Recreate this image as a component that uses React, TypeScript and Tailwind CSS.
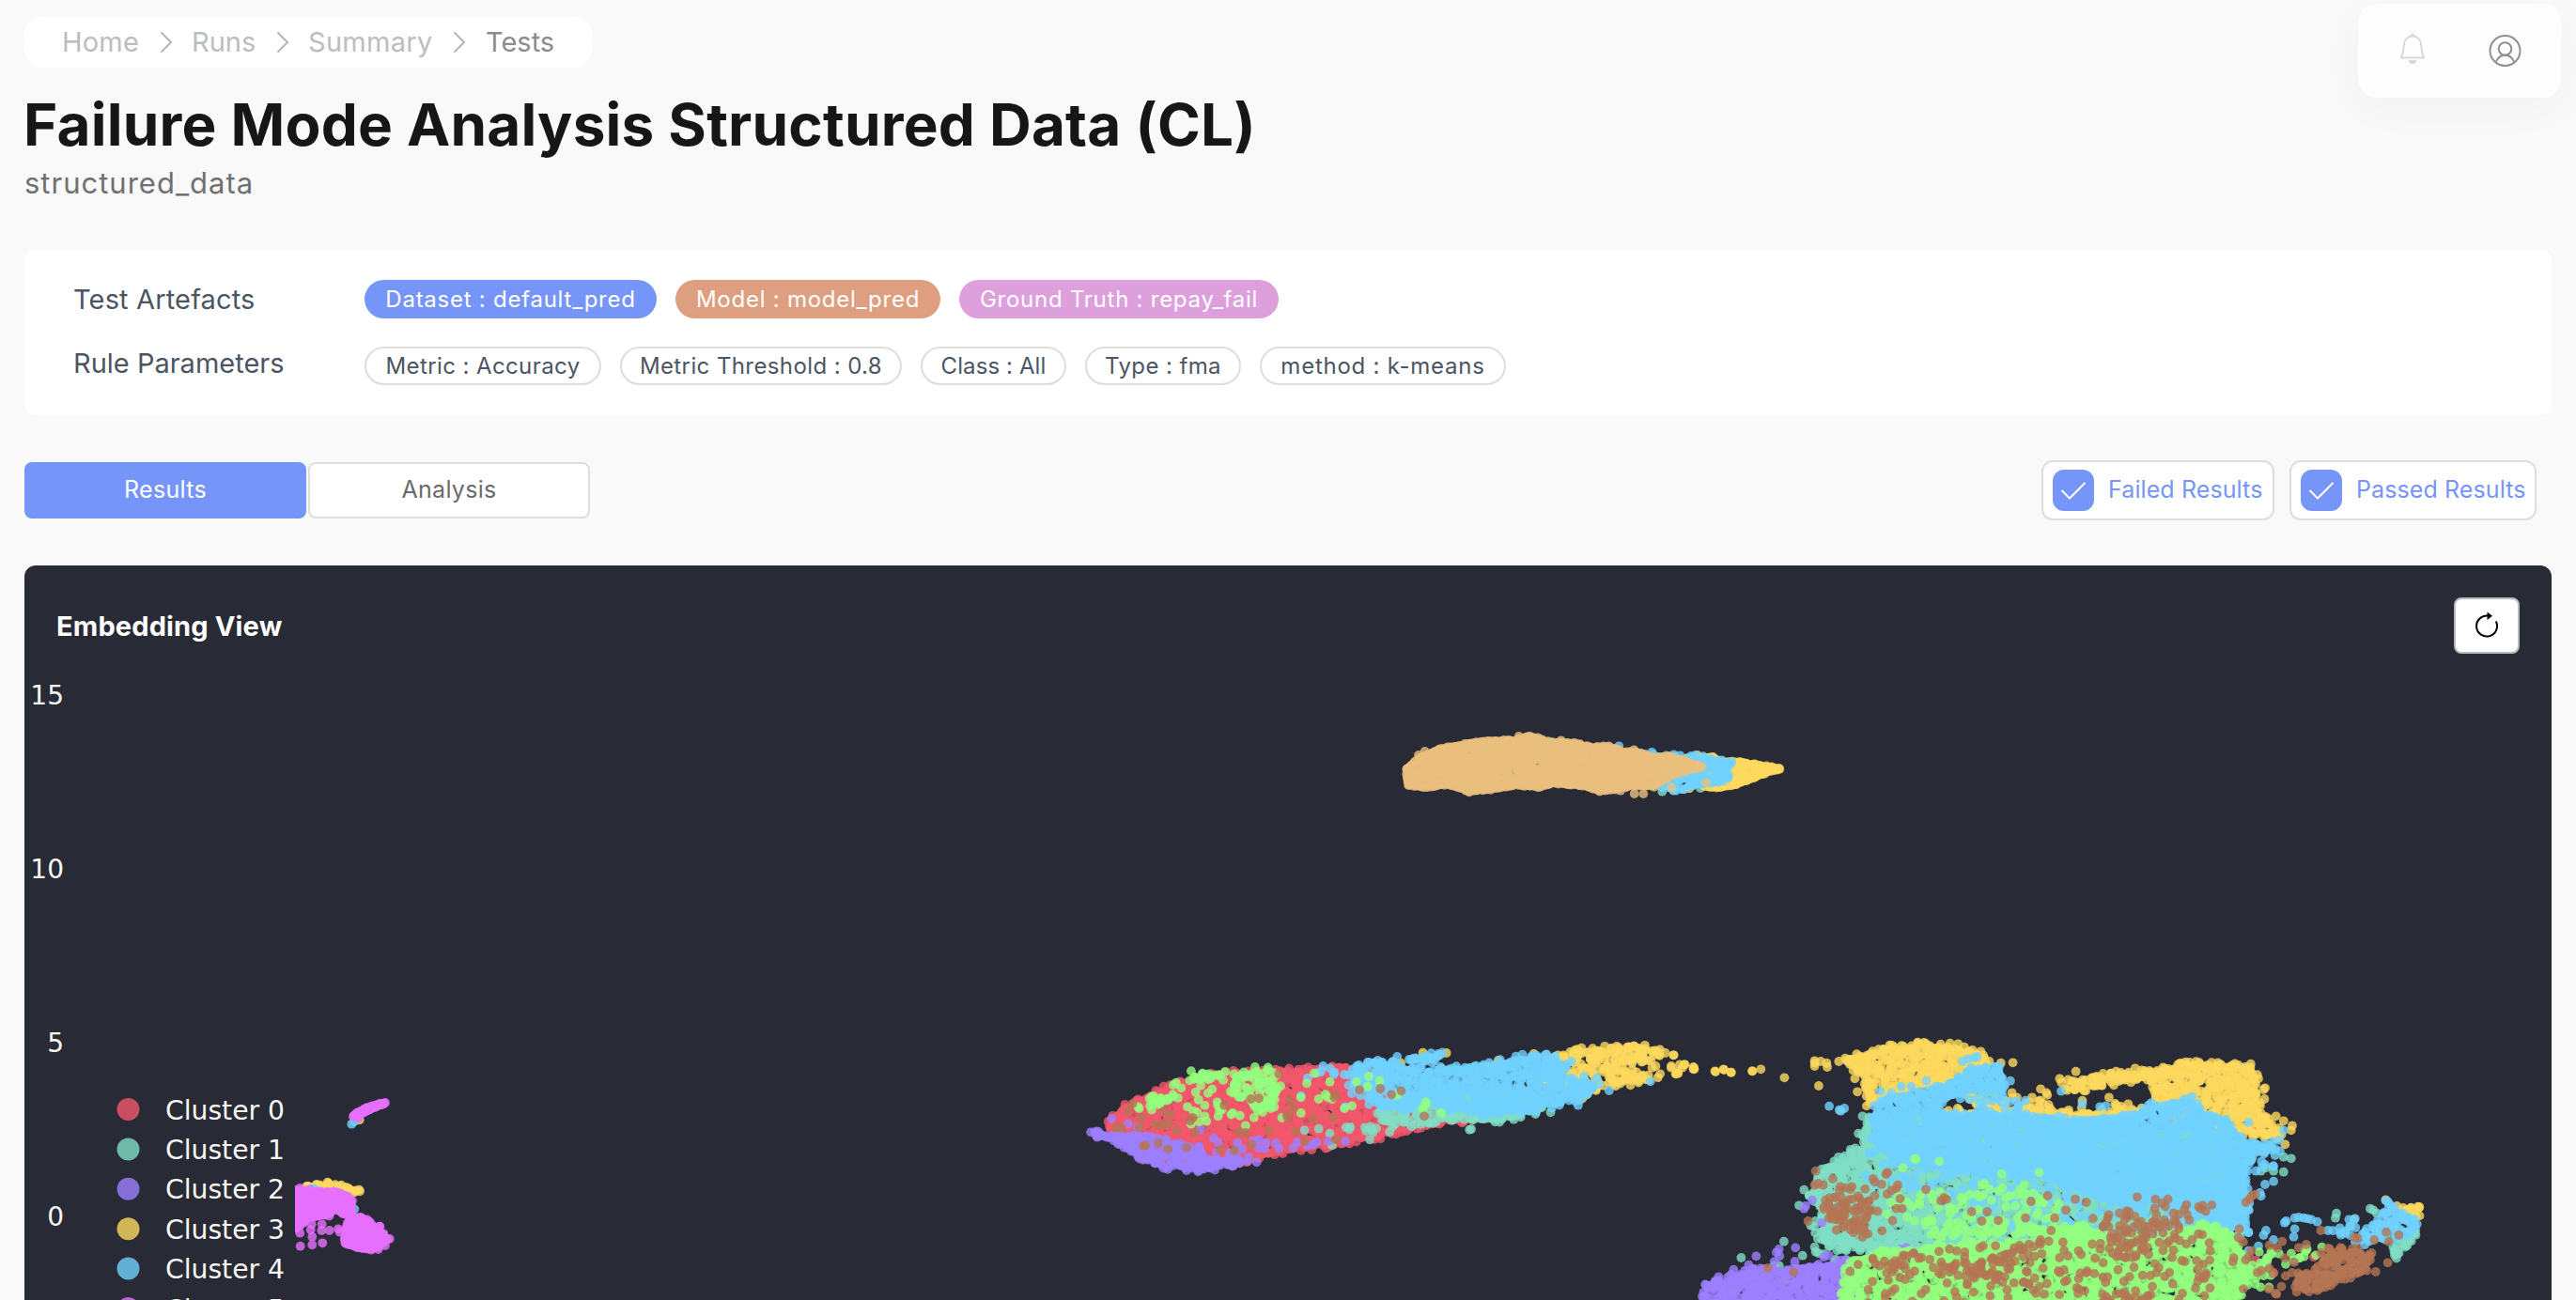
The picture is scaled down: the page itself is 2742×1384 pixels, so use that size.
import type { ReactNode } from "react";
import clsx from "clsx";

const COLORS = {
  red: "#f2576c",
  teal: "#80dfc4",
  purple: "#9c7fff",
  yellow: "#fdd95e",
  cyan: "#71d2ff",
  magenta: "#e670fd",
  orange: "#eabf7e",
  green: "#93ff7e",
  brown: "#b47554",
};

type Color = keyof typeof COLORS;

interface Group {
  color: Color;
  // outline that gets filled with points
  area?: string;
  // average distance between two points
  step?: number;
  // single points
  dots?: string;
}

interface Island {
  x: number;
  y: number;
  sx: number;
  sy: number;
  groups: Group[];
}

const islands: Island[] = [
  {
    x: 1460,
    y: 750,
    sx: 3,
    sy: 3,
    groups: [
      { color: "teal", dots: "928,278 965,275 998,270 1050,267 575,120" },
      { color: "yellow", step: 3.5, area: "1000,172 1090,170 1110,182 1180,186 1300,205 1270,213 1210,238 1170,252 1110,266 1060,260 1000,200" },
      { color: "yellow", dots: "1040,162 1090,168 1152,182 1176,184 1303,206 1015,268 1198,240 1165,255" },
      { color: "cyan", step: 4, area: "900,170 950,170 1050,172 1145,190 1100,215 1138,228 1110,243 1080,250 970,268 920,260" },
      { color: "cyan", dots: "895,153 965,160 985,163 1020,165 1150,185 1135,230 790,133 860,155 900,160" },
      { color: "orange", step: 3.5, area: "112,206 150,174 220,142 320,124 400,116 460,115 500,101 530,108 570,122 650,124 700,138 760,134 800,152 850,154 900,170 950,166 1055,200 1000,208 940,235 900,262 840,258 780,270 730,276 680,260 580,250 530,263 460,256 370,272 310,276 240,255 170,264 117,256" },
      { color: "orange", dots: "839,285 868,285 150,162 838,145 958,265 1068,250 1000,215 605,115 170,150 470,102 312,280 795,275 112,206 118,258" },
    ],
  },
  {
    x: 1130,
    y: 1080,
    sx: 2.119,
    sy: 3,
    groups: [
      { color: "red", step: 4.5, area: "102,345 150,295 220,245 300,205 400,186 540,180 640,172 720,200 760,300 920,335 830,345 720,388 620,412 500,435 400,470 330,478 260,470 180,450 120,375" },
      { color: "teal", step: 5, area: "720,310 780,275 830,240 950,240 1100,260 1080,305 990,335 870,335 790,350 720,345" },
      { color: "teal", step: 8, area: "630,355 720,315 720,375 690,390 640,375" },
      { color: "teal", dots: "548,370 580,365 920,368 924,366 610,418 740,375 1103,313 605,380 695,400 1020,335 830,345" },
      { color: "purple", step: 4.5, area: "70,380 110,388 150,392 240,405 310,430 320,465 400,468 385,485 300,493 230,483 190,463 140,418" },
      { color: "purple", step: 9, area: "330,410 460,400 520,400 640,400 600,412 480,440 400,470 350,450" },
      { color: "purple", dots: "113,333 150,350 313,368 66,376 418,468 440,472 445,400 640,405 575,408 307,497 172,360 343,395 80,392" },
      { color: "yellow", step: 5, area: "1110,132 1170,118 1280,103 1330,110 1355,130 1310,145 1250,155 1250,175 1330,200 1300,212 1220,222 1180,255 1080,210" },
      { color: "yellow", dots: "1380,130 1405,160 1427,175 1425,168 1375,170 1385,190 1332,170 1340,165 1475,183 1493,175 1510,185 1558,181 1065,126 868,123 815,122 985,147 765,155 1175,268 1375,165 1390,182 1400,170 1345,202 1350,190" },
      { color: "cyan", step: 4.5, area: "655,178 700,153 755,160 790,180 900,174 960,162 1060,134 1110,138 1140,165 1100,190 1180,215 1205,228 1190,248 1160,268 1060,305 960,312 880,300 820,270 780,300 700,280 690,210" },
      { color: "cyan", step: 8, area: "550,205 590,165 660,180 690,210 700,280 655,260 640,205" },
      { color: "cyan", step: 5, area: "790,135 860,128 830,150 795,148" },
      { color: "cyan", dots: "540,260 1235,243 1165,290 1328,214 1150,150 1178,198 1207,202 757,135 748,150 640,295 950,325 555,203 590,165 605,172" },
      { color: "green", step: 6, area: "300,193 360,186 358,200 300,208" },
      { color: "green", step: 6, area: "390,205 410,184 470,178 488,240 468,312 440,298 432,262 388,253" },
      { color: "green", step: 6, area: "195,267 252,264 240,278 202,292" },
      { color: "green", step: 12, area: "250,215 360,200 500,185 500,310 380,350 290,350 260,320" },
      { color: "green", dots: "258,218 270,235 172,295 175,300 570,188 553,220 605,215 693,198 717,212 690,230 665,215 655,292 638,300 600,265 610,270 595,255 540,265 540,315 580,270 822,280 815,300 820,290 857,315 757,258 497,330 415,355 292,350 323,325 386,315 353,325" },
      { color: "brown", step: 7, area: "200,352 240,347 370,375 360,388 260,382 215,370" },
      { color: "brown", step: 9, area: "545,340 570,325 640,328 600,350" },
      { color: "brown", dots: "490,190 427,270 445,268 367,290 160,285 150,310 180,330 123,362 135,362 175,360 185,420 189,418 218,410 240,430 282,425 358,432 390,435 428,415 468,370 415,378 400,375 548,405 618,400 528,373 618,255 615,265 672,241 719,237 744,256 766,244 818,325 523,300 510,330 515,275 296,330 230,310 245,320 290,340 508,320" },
    ],
  },
  {
    x: 300,
    y: 1150,
    sx: 3,
    sy: 3,
    groups: [
      { color: "yellow", step: 4, area: "70,345 120,338 150,333 180,340 240,355 200,360 110,350" },
      { color: "yellow", dots: "150,333 190,335 228,353 249,355 175,388 190,392 248,127" },
      { color: "cyan", dots: "105,347 98,346 232,412 185,392 223,140 232,132" },
      { color: "magenta", step: 3.5, area: "30,352 60,352 90,357 180,357 215,374 222,395 222,435 195,425 180,412 160,415 150,432 120,430 80,442 50,470 30,475" },
      { color: "magenta", step: 3.5, area: "218,440 250,438 278,450 298,472 318,490 336,507 308,532 285,538 240,535 200,518 205,470" },
      { color: "magenta", step: 1.8, area: "230,113 242,104 265,93 290,83 325,73 328,74 290,88 265,100 250,109 238,117" },
      { color: "magenta", dots: "58,345 90,348 58,488 59,530 97,526 130,520 97,500 92,478 127,480 152,480 180,475 185,485 128,460 312,467 95,460 70,455 344,507 330,72 313,467 325,490 330,528 308,540 285,542 225,385 228,116 245,120 200,380 190,395" },
    ],
  },
  {
    x: 1780,
    y: 1080,
    sx: 1.867,
    sy: 3,
    groups: [
      { color: "red", dots: "1160,785 1275,775 1195,825" },
      { color: "teal", step: 4.5, area: "395,325 380,380 385,420 345,450 295,510 275,580 300,620 300,720 420,755 760,760 1130,700 1130,500 1100,390 700,345" },
      { color: "teal", step: 8, area: "300,700 420,740 400,800 290,790 270,740" },
      { color: "teal", step: 7, area: "252,685 275,650 300,670 310,735" },
      { color: "teal", step: 6, area: "590,245 640,240 655,275 600,280" },
      { color: "teal", step: 12, area: "80,850 200,800 330,790 350,912 80,912" },
      { color: "teal", dots: "137,777 222,725 283,743 259,770 1215,455 1230,460 1195,500 1215,503 1170,500 1180,490 355,440 370,380 378,325 252,610 262,560 280,570 1320,635 1393,625 1355,655 1387,620 1400,635 1318,650" },
      { color: "teal", step: 5, area: "1435,740 1470,690 1480,700 1460,745 1435,770 1430,765" },
      { color: "purple", step: 4.5, area: "68,872 90,853 160,818 250,818 300,804 345,788 362,850 365,930 62,930" },
      { color: "purple", step: 10, area: "205,745 230,770 380,760 380,800 200,790" },
      { color: "purple", dots: "262,620 265,612 278,593 167,772 245,745 212,750 207,760 297,665 465,745 453,750 68,865 92,838 152,800 122,815" },
      { color: "yellow", step: 4.5, area: "345,147 425,108 490,97 565,106 608,127 628,160 600,200 500,225 430,250 392,283 380,200" },
      { color: "yellow", dots: "283,155 307,155 295,150 308,168 283,148 283,165 331,150 291,228 223,202 176,175 159,181 117,185 103,177 85,181 42,175 43,170 25,160 15,160 12,188 8,190 3,130 677,154 653,155 363,205 368,247 675,250 552,92 568,94 488,92 432,98 613,118 685,265" },
      { color: "yellow", step: 4.5, area: "945,188 1030,158 1090,160 1145,166 1158,195 1158,240 1166,320 1200,370 1208,390 1180,388 1120,370 1050,350 960,300 957,230" },
      { color: "yellow", step: 5, area: "780,218 860,196 945,184 945,205 880,212 840,232 785,238" },
      { color: "yellow", step: 7, area: "700,275 750,243 775,250 760,275 730,312 705,305" },
      { color: "yellow", step: 10, area: "840,240 930,235 900,262 850,255" },
      { color: "yellow", step: 9, area: "800,300 950,280 950,320 800,320" },
      { color: "yellow", step: 8, area: "580,270 700,265 720,320 570,320" },
      { color: "yellow", step: 5, area: "545,317 700,308 940,317 900,332 720,328 545,325" },
      { color: "yellow", dots: "1175,240 1177,270 1178,235 1232,355 1215,340 1230,370 1218,415 1200,325 1178,330 732,238 802,182 920,172 882,182 770,205 1165,205 1165,355 590,265 600,270 1020,152 880,285 868,265 815,275 885,300 567,300 640,290 715,265" },
      { color: "cyan", step: 4.5, area: "402,312 412,272 500,252 560,214 600,180 648,175 658,230 610,233 560,250 530,285 515,312 600,328 720,332 850,342 930,325 950,293 1035,275 1060,328 1095,335 1112,370 1142,415 1195,428 1150,445 1130,550 1150,590 1135,665 1050,655 1000,595 900,600 800,550 750,520 560,500 440,460 402,400" },
      { color: "cyan", step: 7.5, area: "555,250 655,235 690,285 715,325 600,322 575,285" },
      { color: "cyan", step: 8, area: "1140,410 1215,400 1215,435 1190,500 1150,480" },
      { color: "cyan", step: 11, area: "385,420 620,500 900,560 1150,560 1150,735 860,720 700,700 560,600 380,540" },
      { color: "cyan", dots: "312,293 332,305 342,300 335,308 577,150 588,142 600,138 606,135 672,212 650,165 773,245 815,285 850,295 862,292 1145,345 1195,533 1178,543 1178,480 1160,500 1175,705 1145,755 1145,695 1170,580 1168,570 436,250 414,245 505,212 1033,262 702,275 688,290 1215,370 1180,690 1165,740 1195,720 685,305 475,230 455,230" },
      { color: "cyan", step: 5, area: "1375,700 1400,660 1430,620 1450,645 1478,670 1468,698 1430,715 1375,725" },
      { color: "cyan", step: 7, area: "1290,685 1320,655 1375,690 1370,735 1315,705" },
      { color: "cyan", dots: "1220,660 1217,665 1237,650 1245,648 1255,650 1262,652 1270,655 1282,662 1237,685 1235,710 1418,595 1425,605 1480,670 1303,690 1345,655 1357,652" },
      { color: "yellow", step: 6, area: "1450,618 1482,613 1478,640 1465,635" },
      { color: "yellow", dots: "1418,592 1440,612 1485,615 1478,645" },
      { color: "cyan", dots: "1422,598 1430,625 1445,635 1455,655" },
      { color: "green", step: 4.7, area: "390,768 480,755 720,728 760,688 820,680 870,715 960,725 1045,675 1100,695 1130,765 1140,800 1145,840 1110,930 340,930 348,805" },
      { color: "green", step: 11, area: "440,580 700,540 780,600 760,690 520,720 420,650" },
      { color: "green", step: 8, area: "680,560 765,570 750,600 700,595" },
      { color: "green", step: 9, area: "500,640 700,650 760,690 720,730 520,740" },
      { color: "green", dots: "482,461 484,463 531,469 459,490 655,510 729,505 620,540 615,545 648,565 575,583 533,568 1075,685 1100,700" },
      { color: "green", step: 8, area: "1165,755 1320,735 1270,780 1200,810 1180,900 1130,900 1145,800" },
      { color: "brown", step: 6, area: "310,590 394,593 384,640 372,685 340,678 308,640" },
      { color: "brown", step: 14, area: "280,600 330,540 440,530 465,640 440,730 310,740" },
      { color: "brown", step: 6.5, area: "830,648 900,625 965,640 960,705 950,775 885,785 865,700" },
      { color: "brown", step: 8, area: "950,600 1090,605 1060,630 1030,640 1020,720 980,760 960,700" },
      { color: "brown", step: 6.5, area: "535,803 650,770 695,730 730,740 645,855 565,845" },
      { color: "brown", step: 8, area: "540,740 630,740 620,760 540,760" },
      { color: "brown", step: 8, area: "695,790 720,790 718,885 690,880" },
      { color: "brown", step: 9, area: "390,775 490,765 480,860 420,850" },
      { color: "brown", step: 12, area: "350,820 390,770 720,725 1080,690 1100,930 370,930" },
      { color: "brown", step: 6.5, area: "855,885 955,885 960,930 855,930" },
      { color: "brown", step: 5, area: "1295,758 1330,745 1390,772 1375,822 1310,848 1292,880 1237,880 1245,832 1290,812" },
      { color: "brown", step: 14, area: "1110,700 1250,760 1230,920 1110,900" },
      { color: "brown", step: 8, area: "225,815 275,830 268,860 240,845" },
      { color: "brown", dots: "285,500 319,525 283,545 300,545 290,540 399,525 425,510 428,505 357,550 354,558 448,545 445,555 504,559 534,595 545,590 540,585 595,630 626,630 615,660 648,658 713,597 746,579 702,650 760,650 782,625 801,590 823,600 924,583 960,590 985,590 1140,600 1152,578 1159,575 1147,590 1289,690 1212,725 1357,712 1362,715 1419,695 1444,705 1398,822 1422,793 1424,725 1395,720 190,810 1127,685 732,720 753,690 1260,735 1245,745 270,660" },
    ],
  },
];

const ORDER: Color[] = ["red", "teal", "purple", "yellow", "cyan", "magenta", "orange", "green", "brown"];

function parse(s: string) {
  return s.split(" ").map((p) => p.split(",").map(Number));
}

function inside(x: number, y: number, poly: number[][]) {
  let hit = false;
  for (let i = 0, j = poly.length - 1; i < poly.length; j = i++) {
    const [xi, yi] = poly[i];
    const [xj, yj] = poly[j];
    if (yi > y !== yj > y && x < ((xj - xi) * (y - yi)) / (yj - yi) + xi) hit = !hit;
  }
  return hit;
}

// small seeded generator, so the plot is the same on every render
let seed = 7;
function rand() {
  seed = (seed * 16807) % 2147483647;
  return seed / 2147483647;
}

function buildPoints(island: Island) {
  const out: { x: number; y: number; color: Color }[] = [];
  const toPlot = ([x, y]: number[]) => [island.x + x / island.sx, island.y + y / island.sy];

  for (const g of island.groups) {
    if (g.area) {
      const poly = parse(g.area).map(toPlot);
      const step = g.step ?? 5;
      const xs = poly.map((p) => p[0]);
      const ys = poly.map((p) => p[1]);
      for (let y = Math.min(...ys); y <= Math.max(...ys); y += step) {
        for (let x = Math.min(...xs); x <= Math.max(...xs); x += step) {
          const px = x + (rand() - 0.5) * step * 2;
          const py = y + (rand() - 0.5) * step * 2;
          if (inside(px, py, poly)) out.push({ x: px, y: py, color: g.color });
        }
      }
      // dense areas have a closed, slightly ragged rim
      if (step <= 6) {
        const jitter = step < 4 ? 1.5 : step * 1.5;
        poly.forEach(([ax, ay], i) => {
          const [bx, by] = poly[(i + 1) % poly.length];
          const n = Math.ceil(Math.hypot(bx - ax, by - ay) / (step * 0.8));
          for (let k = 0; k < n; k++) {
            out.push({
              x: ax + ((bx - ax) * k) / n + (rand() - 0.5) * jitter,
              y: ay + ((by - ay) * k) / n + (rand() - 0.5) * jitter,
              color: g.color,
            });
          }
        });
      }
    }
    if (g.dots) {
      for (const p of parse(g.dots).map(toPlot)) out.push({ x: p[0], y: p[1], color: g.color });
    }
  }
  return out.sort((a, b) => ORDER.indexOf(a.color) - ORDER.indexOf(b.color));
}

const points = islands.flatMap(buildPoints);

const ticks = [
  { label: "15", y: 750 },
  { label: "10", y: 935 },
  { label: "5", y: 1120 },
  { label: "0", y: 1305 },
];

const legend: Color[] = ["red", "teal", "purple", "yellow", "cyan", "magenta"];

function EmbeddingPlot() {
  return (
    <svg className="block h-[684px] w-full" viewBox="26 700 2690 684">
      <defs>
        <clipPath id="plot-area">
          <rect x="314" y="700" width="2402" height="684" />
        </clipPath>
      </defs>
      <g clipPath="url(#plot-area)" fillOpacity={0.8}>
        {points.map((p, i) => (
          <circle key={i} cx={p.x.toFixed(1)} cy={p.y.toFixed(1)} r={4.9} fill={COLORS[p.color]} />
        ))}
      </g>
      <g className="fill-[#f8f8f2] font-['DejaVu_Sans',sans-serif] text-[28px]">
        {ticks.map((t) => (
          <text key={t.label} x={68} y={t.y} textAnchor="end">
            {t.label}
          </text>
        ))}
        {legend.map((color, i) => (
          <g key={color}>
            <circle cx={136.5} cy={1181 + i * 42.4} r={12} fill={COLORS[color]} fillOpacity={0.8} />
            <text x={176} y={1191.5 + i * 42.4} textLength={127} lengthAdjust="spacingAndGlyphs">
              Cluster {i}
            </text>
          </g>
        ))}
      </g>
    </svg>
  );
}

function Chevron() {
  return (
    <svg className="h-[24px] w-[14px]" viewBox="0 0 14 24" fill="none" stroke="#b5b5b5" strokeWidth="2">
      <path d="M1.5 1.5 12 12 1.5 22.5" />
    </svg>
  );
}

function Breadcrumbs() {
  return (
    <nav className="flex h-[55px] w-[604px] items-center rounded-[20px] bg-white pl-[40px] text-[29px] text-[#bdbdbd]">
      <span className="w-[104px] tracking-[0.2px]">Home</span>
      <Chevron />
      <span className="ml-[20px] w-[90px]">Runs</span>
      <Chevron />
      <span className="ml-[20px] w-[154px] tracking-[0.3px]">Summary</span>
      <Chevron />
      <span className="ml-[21px] text-[#8c8c8c]">Tests</span>
    </nav>
  );
}

function UserMenu() {
  return (
    <div className="mt-[4px] flex h-[100px] w-[216px] shrink-0 rounded-[20px] bg-[#fdfdfd] shadow-[0_10px_50px_rgba(0,0,0,0.03)]">
      <svg className="mt-[31px] ml-[44px] h-[34px] w-[28px]" viewBox="0 0 28 34">
        <path
          d="M2 26.6C4.4 21 4.4 18 4.8 13.5 5.2 7 9 3.6 14 3.6S22.8 7 23.2 13.5C23.6 18 23.6 21 26 26.6Z"
          fill="none"
          stroke="#d8d8d8"
          strokeWidth="2"
        />
        <path d="M11.5 3a2.5 2.5 0 0 1 5 0ZM10 29h8a4 4 0 0 1-8 0Z" fill="#d8d8d8" />
      </svg>
      <svg className="mt-[32px] ml-[66px] h-[36px] w-[36px]" viewBox="0 0 36 36" fill="none" stroke="#8f8f8f" strokeWidth="2">
        <circle cx="18.5" cy="18" r="16" />
        <circle cx="18.5" cy="16" r="6.8" />
        <path d="M8.7 30.5C10.5 25.5 14 22.8 18.5 22.8S26.5 25.5 28.3 30.5" />
      </svg>
    </div>
  );
}

function Pill({ className, children }: { className?: string; children: ReactNode }) {
  return (
    <span className={clsx("flex h-[41px] items-center justify-center rounded-full text-[24px] whitespace-nowrap", className)}>
      {children}
    </span>
  );
}

function ResultToggle({ label, className }: { label: string; className?: string }) {
  return (
    <label className={clsx("flex h-[64px] items-center rounded-[12px] border-2 border-[#dddddd] bg-white pl-[10px] text-[25px] text-[#7695f9]", className)}>
      <span className="flex size-[44px] items-center justify-center rounded-[12px] bg-[#7695f9]">
        <svg className="h-[20px] w-[28px]" viewBox="0 0 28 20" fill="none" stroke="white" strokeWidth="2">
          <path d="M1.5 10 10 18.5 26.5 2" />
        </svg>
      </span>
      <span className="ml-[15px] tracking-[0.1px] whitespace-nowrap">{label}</span>
    </label>
  );
}

export default function App() {
  return (
    <div className="h-[1384px] w-[2742px] overflow-hidden bg-[#f9f9f9] pl-[26px] font-[Inter,sans-serif]">
      <header className="flex h-[266px] justify-between pr-[16px]">
        <div className="pt-[17px]">
          <Breadcrumbs />
          <h1 className="mt-[23px] -ml-px text-[62px] leading-[76px] font-bold tracking-[0.2px] whitespace-nowrap text-[#161616]">
            Failure Mode Analysis Structured Data (CL)
          </h1>
          <p className="mt-[4px] text-[31px] leading-[40px] tracking-[1px] text-[#707070]">structured_data</p>
        </div>
        <UserMenu />
      </header>

      <main className="w-[2690px]">
        <section className="flex h-[176px] flex-col rounded-[12px] bg-white pt-[32px] pl-[52px] text-[#4b5563]">
          <div className="flex h-[41px] items-center">
            <span className="w-[310px] text-[29px] tracking-[0.15px]">Test Artefacts</span>
            <div className="flex gap-[20px] tracking-[0.75px] text-white">
              <Pill className="w-[311px] bg-[#7695f9]">Dataset : default_pred</Pill>
              <Pill className="w-[282px] bg-[#de9f80]">Model : model_pred</Pill>
              <Pill className="w-[340px] bg-[#dda0dd]">Ground Truth : repay_fail</Pill>
            </div>
          </div>
          <div className="mt-[30px] flex h-[41px] items-center">
            <span className="-mt-[6px] w-[310px] text-[29px]">Rule Parameters</span>
            <div className="flex gap-[20px] tracking-[0.4px]">
              <Pill className="w-[252px] border-2 border-[#dddddd]">Metric : Accuracy</Pill>
              <Pill className="w-[300px] border-2 border-[#dddddd]">Metric Threshold : 0.8</Pill>
              <Pill className="w-[155px] border-2 border-[#dddddd] tracking-[0.1px]">Class : All</Pill>
              <Pill className="w-[166px] border-2 border-[#dddddd]">Type : fma</Pill>
              <Pill className="w-[262px] border-2 border-[#dddddd] tracking-[0.75px]">method : k-means</Pill>
            </div>
          </div>
        </section>

        <div className="mt-[48px] flex h-[64px] items-center justify-between pr-[16px]">
          <div className="flex gap-[2px] text-[25px] tracking-[0.3px]">
            <button className="h-[60px] w-[300px] rounded-[8px] bg-[#7695f9] text-white">Results</button>
            <button className="h-[60px] w-[300px] rounded-[8px] border-2 border-[#dddddd] bg-white text-[#6b6b6b]">Analysis</button>
          </div>
          <div className="flex gap-[16px]">
            <ResultToggle label="Failed Results" className="w-[248px]" />
            <ResultToggle label="Passed Results" className="w-[263px]" />
          </div>
        </div>

        <section className="mt-[48px] h-[782px] rounded-t-[12px] bg-[#282a36]">
          <div className="flex h-[98px] items-start justify-between pt-[34px] pr-[34px] pl-[34px]">
            <h2 className="mt-[11px] text-[29px] leading-[40px] font-bold tracking-[0.15px] text-white">Embedding View</h2>
            <button className="flex h-[60px] w-[70px] items-center justify-center rounded-[8px] border-2 border-[#b9b9b9] bg-white">
              <svg className="-mt-[3px] h-[28px] w-[26px]" viewBox="0 0 26 28" fill="none" stroke="black" strokeWidth="2">
                <path d="M22.8 10.5A11 11 0 1 1 14 4.6" />
                <path d="M13.5 0.5 19 4.8 13.5 9Z" fill="black" stroke="none" />
              </svg>
            </button>
          </div>
          <EmbeddingPlot />
        </section>
      </main>
    </div>
  );
}
